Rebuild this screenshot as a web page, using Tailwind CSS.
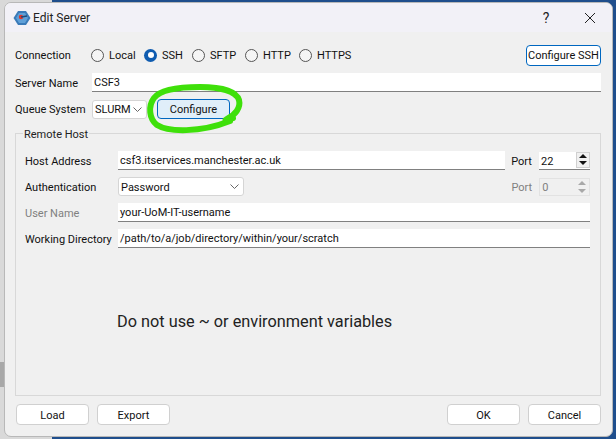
<!DOCTYPE html>
<html>
<head>
<meta charset="utf-8">
<script src="https://cdn.jsdelivr.net/npm/@tailwindcss/browser@4"></script>
</head>
<body class="m-0 w-[616px] h-[439px] overflow-hidden relative bg-[#1f4e8c] font-['Roboto',sans-serif] text-[11px] leading-[16px] text-[#111]">
<div class="absolute left-0 top-0 bottom-0 w-[52px] bg-[#d9d9d9]"></div>
<div class="absolute left-0 top-[362px] w-[4px] h-[25px] bg-[#a8a8a8]"></div>
<div class="absolute left-[4px] top-[2px] w-[609px] h-[435px] bg-[#f0f0f0] rounded-[7px] border border-[#b8b8b8] overflow-hidden flex flex-col">
  <div class="h-[29px] shrink-0 bg-[#f2f1f7] flex items-center pl-[8px]">
    <svg width="18" height="18" viewBox="0 0 18 18" class="shrink-0"><polygon points="5,2 13,2 17.5,9 13,16 5,16 .5,9" fill="#3a7ab8"/><polygon points="6,4 12,4 15,9 12,14 6,14 3,9" fill="#5fa0d8"/><circle cx="8" cy="8" r="2.2" fill="#e0352b"/><path d="M8 8 L14 7" stroke="#1e4a78" stroke-width="1.5"/></svg>
    <span class="ml-[2px] text-[12px] text-[#222]">Edit Server</span>
    <div class="ml-auto flex items-center">
      <span class="text-[14px] w-[20px] text-center text-[#222]">?</span>
      <svg width="12" height="12" viewBox="0 0 12 12" class="ml-[28px] mr-[16px]"><path d="M1 1 L11 11 M11 1 L1 11" stroke="#222" stroke-width="1"/></svg>
    </div>
  </div>
  <div class="flex-1 flex flex-col pl-[10px] pr-[11px] pt-[10px]">
    <div class="h-[26px] flex items-center">
      <span class="w-[76px] shrink-0 pt-[2px]">Connection</span>
      <div class="flex items-center">
        <span class="w-[53px] flex items-center"><span class="w-[13px] h-[13px] rounded-full border border-[#555] bg-[#f5f5f5] mr-[5px]"></span><span class="pt-[2px]">Local</span></span>
        <span class="w-[48px] flex items-center"><span class="w-[13px] h-[13px] rounded-full bg-[#0f5cb0] mr-[5px] flex items-center justify-center"><span class="w-[6px] h-[6px] rounded-full bg-white"></span></span><span class="pt-[2px]">SSH</span></span>
        <span class="w-[53px] flex items-center"><span class="w-[13px] h-[13px] rounded-full border border-[#555] bg-[#f5f5f5] mr-[5px]"></span><span class="pt-[2px]">SFTP</span></span>
        <span class="w-[54px] flex items-center"><span class="w-[13px] h-[13px] rounded-full border border-[#555] bg-[#f5f5f5] mr-[5px]"></span><span class="pt-[2px]">HTTP</span></span>
        <span class="flex items-center"><span class="w-[13px] h-[13px] rounded-full border border-[#555] bg-[#f5f5f5] mr-[5px]"></span><span class="pt-[2px]">HTTPS</span></span>
      </div>
      <button class="ml-auto w-[75px] h-[21px] rounded-[4px] bg-white border border-[#0067c0] text-center whitespace-nowrap pt-[2px]">Configure SSH</button>
    </div>
    <div class="flex items-center h-[19px] mt-[5px]">
      <span class="w-[77px] shrink-0 pt-[2px]">Server Name</span>
      <div class="flex-1 h-[19px] bg-white border-b border-[#808080] pl-[2px] leading-[20px]">CSF3</div>
    </div>
    <div class="flex items-center h-[20px] mt-[7px]">
      <span class="w-[77px] shrink-0 whitespace-nowrap pt-[2px]">Queue System</span>
      <div class="w-[55px] h-[19px] bg-white border border-[#d5d5d5] rounded-[3px] flex items-center pl-[2px]"><span class="pt-[2px]">SLURM</span>
        <svg width="9" height="5" viewBox="0 0 9 5" class="ml-auto mr-[4px]"><path d="M.5 .5 L4.5 4.5 L8.5 .5" fill="none" stroke="#666"/></svg>
      </div>
      <button class="ml-[10px] w-[73px] h-[20px] bg-[#e0eef9] border border-[#0067c0] rounded-[4px] pt-[2px]">Configure</button>
    </div>
    <div class="relative mt-[14px] h-[263px] border border-[#d8d8d8] pl-[9px] pr-[10px] pt-[17px] flex flex-col">
      <span class="absolute left-[7px] top-[-7px] bg-[#f0f0f0] px-[1px] text-[#222]">Remote Host</span>
      <div class="flex items-center h-[19px]">
        <span class="w-[93px] shrink-0 pt-[2px]">Host Address</span>
        <div class="w-[388px] h-[19px] bg-white border-b border-[#808080] pl-[2px] leading-[20px]">csf3.itservices.manchester.ac.uk</div>
        <span class="ml-[6px] w-[28px] pt-[2px]">Port</span>
        <div class="w-[51px] h-[18px] bg-white border-b border-[#808080] pl-[2px] leading-[20px] flex">22
          <div class="ml-auto w-[14px] h-[16px] bg-[#f0f0f0] border border-[#d0d0d0] flex flex-col items-center justify-around">
            <span class="w-0 h-0 border-x-[4px] border-x-transparent border-b-[4px] border-b-[#111]"></span>
            <span class="w-0 h-0 border-x-[4px] border-x-transparent border-t-[4px] border-t-[#111]"></span>
          </div>
        </div>
      </div>
      <div class="flex items-center h-[19px] mt-[7px]">
        <span class="w-[93px] shrink-0 pt-[2px]">Authentication</span>
        <div class="w-[127px] h-[19px] bg-white border border-[#d5d5d5] rounded-[3px] flex items-center pl-[2px]"><span class="pt-[2px]">Password</span>
          <svg width="9" height="5" viewBox="0 0 9 5" class="ml-auto mr-[4px]"><path d="M.5 .5 L4.5 4.5 L8.5 .5" fill="none" stroke="#666"/></svg>
        </div>
        <span class="ml-[267px] w-[28px] text-[#808080] pt-[2px]">Port</span>
        <div class="w-[51px] h-[18px] border border-[#e2e2e2] pl-[2px] leading-[18px] flex text-[#808080]">0
          <div class="ml-auto w-[14px] h-[16px] flex flex-col items-center justify-around">
            <span class="w-0 h-0 border-x-[4px] border-x-transparent border-b-[4px] border-b-[#a8a8a8]"></span>
            <span class="w-0 h-0 border-x-[4px] border-x-transparent border-t-[4px] border-t-[#a8a8a8]"></span>
          </div>
        </div>
      </div>
      <div class="flex items-center h-[19px] mt-[7px]">
        <span class="w-[93px] shrink-0 text-[#808080] pt-[2px]">User Name</span>
        <div class="flex-1 h-[19px] bg-white border-b border-[#808080] pl-[2px] leading-[20px]">your-UoM-IT-username</div>
      </div>
      <div class="flex items-center h-[19px] mt-[7px]">
        <span class="w-[93px] shrink-0 whitespace-nowrap pt-[2px]">Working Directory</span>
        <div class="flex-1 h-[19px] bg-white border-b border-[#808080] pl-[2px] leading-[20px]">/path/to/a/job/directory/within/your/scratch</div>
      </div>
      <p class="ml-[92px] mt-[64px] text-[16.3px] leading-[20px] text-[#222] whitespace-nowrap">Do not use ~ or environment variables</p>
    </div>
    <div class="flex mt-[8px] ml-[1px]">
      <button class="w-[73px] h-[21px] bg-white border border-[#d0d0d0] rounded-[4px] pt-[2px]">Load</button>
      <button class="w-[73px] h-[21px] bg-white border border-[#d0d0d0] rounded-[4px] ml-[8px] pt-[2px]">Export</button>
      <button class="w-[73px] h-[21px] bg-white border border-[#d0d0d0] rounded-[4px] ml-auto pt-[2px]">OK</button>
      <button class="w-[73px] h-[21px] bg-white border border-[#d0d0d0] rounded-[4px] ml-[8px] pt-[2px]">Cancel</button>
    </div>
  </div>
</div>
<svg class="absolute left-0 top-0 pointer-events-none" width="616" height="439" viewBox="0 0 616 439"><path d="M227 119 C235 115 241 108 239 100 C236 91 220 87 200 87 C178 87 160 90 154 98 C148 106 149 119 157 125 C168 132 200 133 230 121 C222 120 226 120 233 118" fill="none" stroke="#3fe00a" stroke-width="6" stroke-linecap="round" stroke-linejoin="round"/></svg>
</body>
</html>
